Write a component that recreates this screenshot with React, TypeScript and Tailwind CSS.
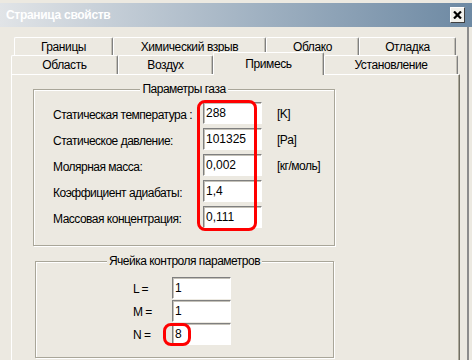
import clsx from "clsx";

function Tab({ label, w, active }: { label: string; w: string; active?: boolean }) {
    return (
        <div
            className={clsx(
                "flex items-center justify-center rounded-t-[2px] border-l border-t border-r border-l-white border-t-white border-r-[#808080] bg-[#ece9e1] tracking-[-0.4px] shadow-[inset_-1px_0_0_#c2bfb5]",
                w,
                active ? "relative z-10 -mt-[3px] h-[23px]" : "h-full"
            )}
        >
            {label}
        </div>
    );
}

function Field({ value, w = "w-[59px]" }: { value: string; w?: string }) {
    return (
        <div
            className={clsx(
                "flex h-[22px] items-center border border-t-[#7f7f7f] border-l-[#7f7f7f] border-r-white border-b-white bg-white pl-[2px] tracking-normal shadow-[inset_1px_1px_0_#c4c1b8]",
                w
            )}
        >
            {value}
        </div>
    );
}

const gas = [
    { label: "Статическая температура :", value: "288", unit: "[K]" },
    { label: "Статическое давление:", value: "101325", unit: "[Pa]" },
    { label: "Молярная масса:", value: "0,002", unit: "[кг/моль]" },
    { label: "Коэффициент адиабаты:", value: "1,4", unit: "" },
    { label: "Массовая концентрация:", value: "0,111", unit: "" },
];

const cell = [
    { label: "L =", value: "1" },
    { label: "M =", value: "1" },
    { label: "N =", value: "8" },
];

export default function App() {
    return (
        <div className="relative h-[360px] w-[472px] overflow-hidden bg-[#ece9e1] font-['Liberation_Sans',Arial,sans-serif] text-[12px] leading-[14px] text-black">
            {/* Title bar */}
            <div className="pt-[3px]">
                <div className="flex h-[24px] items-center justify-between bg-gradient-to-r from-[#e1e4e7] to-[#6d89a3] pl-[6px] pr-[7px]">
                    <span className="font-bold tracking-[-0.3px] text-white">Страница свойств</span>
                    <div className="flex h-[16px] w-[15px] items-center justify-center border border-t-white border-l-white border-r-[#404040] border-b-[#404040] bg-[#f2f1ec]">
                        <svg width="9" height="8" viewBox="0 0 9 8">
                            <path d="M1 0.5L8 7.5M8 0.5L1 7.5" stroke="black" strokeWidth="2.2" />
                        </svg>
                    </div>
                </div>
            </div>

            {/* Dialog body */}
            <div className="h-[333px] w-[469px] border-r-2 border-r-[#8c8c8c] pl-[11px] pt-[10px]">
                {/* Tabs */}
                <div className="flex h-[18px] pl-[3px]">
                    <Tab label="Границы" w="w-[99px]" />
                    <Tab label="Химический взрыв" w="w-[153px]" />
                    <Tab label="Облако" w="w-[93px]" />
                    <Tab label="Отладка" w="w-[97px]" />
                </div>
                <div className="flex h-[19px]">
                    <Tab label="Область" w="w-[107px]" />
                    <Tab label="Воздух" w="w-[95px]" />
                    <Tab label="Примесь" w="w-[111px]" active />
                    <Tab label="Установление" w="w-[134px]" />
                </div>

                {/* Panel */}
                <div className="h-[300px] w-[449px] border-l border-t border-r border-l-white border-t-white border-r-[#716f64] pl-[21px] tracking-[-0.5px] shadow-[inset_-1px_0_0_#aca899]">
                    <fieldset className="mt-[7px] w-[302px] border border-[#a9a699] pb-[17px] shadow-[1px_1px_0_white,inset_1px_1px_0_white]">
                        <legend className="mx-auto bg-[#ece9e1] px-[2px]">Параметры газа</legend>
                        <div className="flex flex-col gap-[4px] pl-[19px] pt-[6px]">
                            {gas.map((r) => (
                                <div key={r.label} className="flex h-[22px] items-center">
                                    <div className="w-[150px] whitespace-nowrap pt-[4px]">{r.label}</div>
                                    <Field value={r.value} />
                                    <div className="ml-[15px] pt-[2px]">{r.unit}</div>
                                </div>
                            ))}
                        </div>
                    </fieldset>

                    <fieldset className="ml-[2px] mt-[8px] w-[299px] border border-[#a9a699] pb-[12px] shadow-[1px_1px_0_white,inset_1px_1px_0_white]">
                        <legend className="mx-auto bg-[#ece9e1] px-[2px]">Ячейка контроля параметров</legend>
                        <div className="flex flex-col gap-[1px] pl-[97px] pt-[9px]">
                            {cell.map((r) => (
                                <div key={r.label} className="flex h-[22px] items-center">
                                    <div className="w-[39px] pt-[2px]">{r.label}</div>
                                    <Field value={r.value} />
                                </div>
                            ))}
                        </div>
                    </fieldset>
                </div>
            </div>

            {/* Red annotation marks */}
            <div className="pointer-events-none absolute left-[230px] top-[55px] h-[19px] w-[77px] rounded-[9px] border-2 border-[#ff0000]" />
            <div className="pointer-events-none absolute left-[197px] top-[100px] h-[131px] w-[60px] rounded-[8px] border-[3px] border-[#ff0000]" />
            <div className="pointer-events-none absolute left-[163px] top-[323px] h-[23px] w-[28px] rounded-[8px] border-[3px] border-[#ff0000]" />
        </div>
    );
}
